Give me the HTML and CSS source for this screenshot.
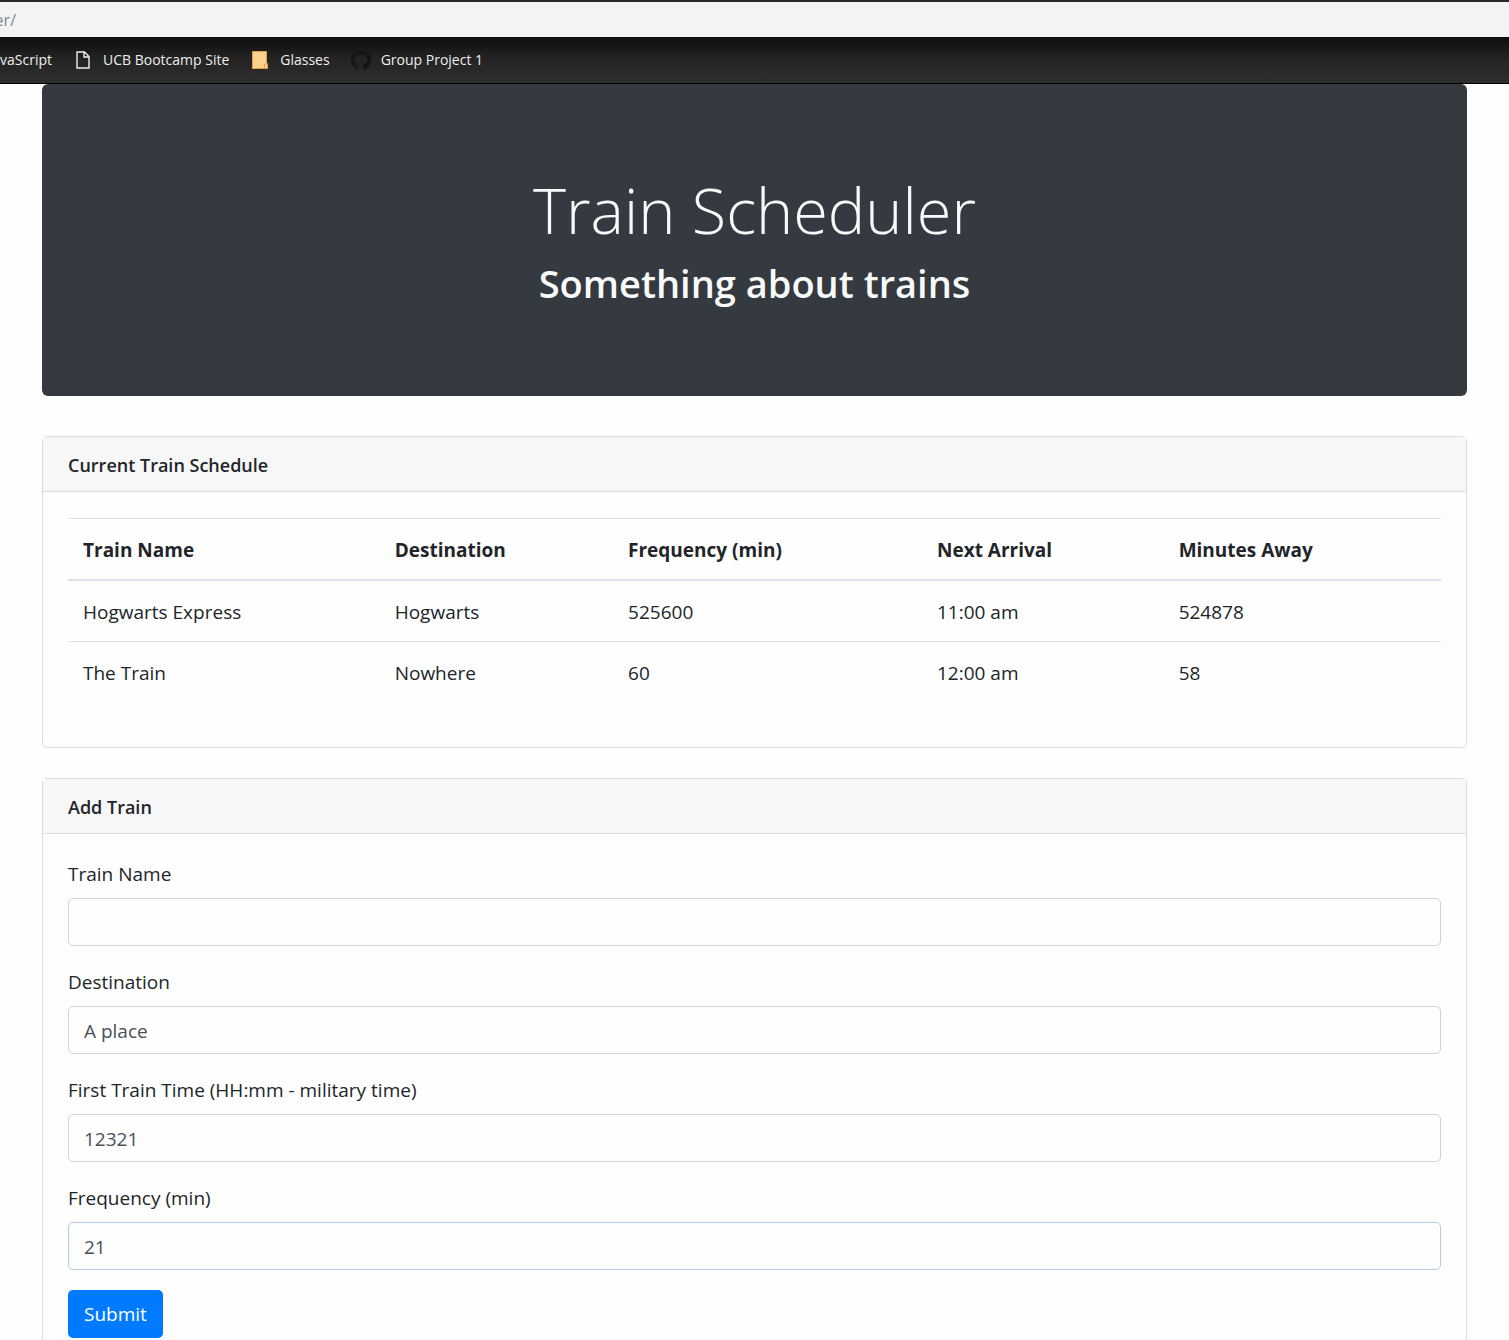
FILE: index.html
```html
<!DOCTYPE html>
<html lang="en">
<head>
  <meta charset="utf-8">
  <meta name="viewport" content="width=device-width, initial-scale=1">
  <title>Train Scheduler</title>
  <link rel="stylesheet" href="styles.css">
</head>
<body>
  <div class="address-bar"><span class="address">er/</span></div>
  <nav class="bookmarks" aria-label="Bookmarks">
    <a class="bookmark" href="#">vaScript</a>
    <a class="bookmark" href="#">
      <svg class="icon" viewBox="0 0 20 20" aria-hidden="true"><path d="M4 2h7.5L16 6.500V18H4zM11 2v5h5" fill="none" stroke="#eee" stroke-width="1.400"/></svg>
      <span>UCB Bootcamp Site</span>
    </a>
    <a class="bookmark" href="#">
      <svg class="icon" viewBox="0 0 20 20" aria-hidden="true"><path d="M2.500 1.500h14v12h1v5h-15z" fill="#fbd08d" stroke="#e0a04a"/><path d="M14.500 18v-4h2" fill="none" stroke="#e0a04a"/></svg>
      <span>Glasses</span>
    </a>
    <a class="bookmark" href="#">
      <svg class="icon" viewBox="0 0 16 16" aria-hidden="true"><path fill="#131415" d="M8 0C3.580 0 0 3.580 0 8c0 3.540 2.290 6.530 5.470 7.590.4.070.550-.170.550-.380 0-.190-.010-.820-.010-1.490-2.010.370-2.530-.490-2.690-.940-.090-.230-.480-.940-.820-1.130-.280-.150-.680-.520-.010-.530.630-.010 1.080.580 1.230.820.720 1.210 1.870.870 2.330.660.070-.520.280-.870.510-1.070-1.780-.2-3.640-.890-3.640-3.950 0-.870.310-1.590.820-2.150-.080-.2-.360-1.020.080-2.120 0 0 .670-.210 2.200.820.640-.180 1.320-.270 2-.270s1.360.090 2 .270c1.530-1.040 2.200-.820 2.200-.820.440 1.100.160 1.920.080 2.120.510.560.820 1.270.820 2.150 0 3.070-1.870 3.750-3.650 3.950.290.250.540.730.540 1.480 0 1.070-.010 1.930-.010 2.200 0 .210.150.460.550.380A8.010 8.010 0 0 0 16 8c0-4.420-3.580-8-8-8z"/></svg>
      <span>Group Project 1</span>
    </a>
  </nav>

  <main class="container">
    <header class="jumbotron">
      <h1 class="title">Train Scheduler</h1>
      <p class="subtitle">Something about trains</p>
    </header>

    <section class="card">
      <h2 class="card-header">Current Train Schedule</h2>
      <div class="schedule-body">
        <table class="schedule">
          <thead>
            <tr>
              <th class="col-name" scope="col">Train Name</th>
              <th class="col-destination" scope="col">Destination</th>
              <th class="col-frequency" scope="col">Frequency (min)</th>
              <th class="col-arrival" scope="col">Next Arrival</th>
              <th class="col-away" scope="col">Minutes Away</th>
            </tr>
          </thead>
          <tbody>
            <tr><td>Hogwarts Express</td><td>Hogwarts</td><td>525600</td><td>11:00 am</td><td>524878</td></tr>
            <tr><td>The Train</td><td>Nowhere</td><td>60</td><td>12:00 am</td><td>58</td></tr>
          </tbody>
        </table>
      </div>
    </section>

    <section class="card">
      <h2 class="card-header">Add Train</h2>
      <form class="train-form">
        <div class="field">
          <label for="train-name">Train Name</label>
          <input id="train-name" type="text">
        </div>
        <div class="field">
          <label for="destination">Destination</label>
          <input id="destination" type="text" value="A place">
        </div>
        <div class="field">
          <label for="first-time">First Train Time (HH:mm - military time)</label>
          <input id="first-time" type="text" value="12321">
        </div>
        <div class="field">
          <label for="frequency">Frequency (min)</label>
          <input class="active" id="frequency" type="text" value="21">
        </div>
        <button class="submit" type="submit">Submit</button>
      </form>
    </section>
  </main>
</body>
</html>
```
FILE: styles.css
```css
* {
  box-sizing: border-box;
}

body {
  margin: 0;
  background: #fefefe;
  color: #212529;
  font: 19px/30px "Segoe UI", "Open Sans", sans-serif;
}

.address-bar {
  height: 37px;
  border-top: 2px solid #2d2b2a;
  background: #f1f3f4;
  color: #85888b;
  font-size: 16px;
  line-height: 36px;
}

/* Only the tail of the address stays in view */
.address {
  display: flex;
  justify-content: flex-end;
  width: 16px;
  overflow: hidden;
}

.bookmarks {
  display: flex;
  align-items: center;
  gap: 21px;
  height: 47px;
  border-bottom: 1px solid #000;
  background: linear-gradient(#0e0e0e, #242424 50%, #2e2e2e);
  overflow: hidden;
}

.bookmark {
  display: flex;
  align-items: center;
  gap: 10px;
  color: #eee;
  font-size: 14px;
  text-decoration: none;
  white-space: nowrap;
}

.icon {
  flex: none;
  width: 20px;
  height: 20px;
}

.container {
  padding: 0 42px 30px;
}

.jumbotron {
  margin-bottom: 40px;
  padding: 80px 40px 86px;
  border-radius: 6px;
  background: #343a40;
  color: #f8f9fa;
  text-align: center;
}

.title {
  margin: 0;
  font-size: 63px;
  font-weight: 300;
  line-height: 92px;
}

.subtitle {
  margin: 0;
  font-size: 38px;
  font-weight: 600;
  line-height: 54px;
}

.card {
  margin-bottom: 30px;
  border: 1px solid #dcdddd;
  border-radius: 5px;
}

.card-header {
  margin: 0;
  padding: 13px 25px 11px;
  border-bottom: 1px solid #dcdddd;
  background: #f7f7f7;
  font-size: 18px;
  font-weight: 600;
}

.schedule-body {
  padding: 26px 25px 45px;
}

.schedule {
  width: 100%;
  border-spacing: 0;
  table-layout: fixed;
}

.schedule th,
.schedule td {
  padding: 16px 15px 14px;
  border-top: 1px solid #dee2e6;
  text-align: left;
}

.schedule th {
  border-bottom: 2px solid #dee2e6;
  font-weight: 700;
}

.schedule tbody tr:first-child td {
  border-top: 0;
}

.col-name { width: 22.7%; }
.col-destination { width: 17%; }
.col-frequency { width: 22.5%; }
.col-arrival { width: 17.6%; }
.col-away { width: 20.2%; }

.train-form {
  padding: 24px 25px;
}

.field {
  display: flex;
  flex-direction: column;
  gap: 8px;
  margin-bottom: 20px;
}

.field label {
  line-height: 32px;
}

.field input {
  width: 100%;
  height: 48px;
  padding: 2px 15px 0;
  border: 1px solid #ced4da;
  border-radius: 5px;
  outline: 0;
  background: #fefefe;
  color: #495057;
  font: inherit;
}

.field .active {
  border-color: #b3cde8;
}

.submit {
  height: 48px;
  padding: 0 16px;
  border: 0;
  border-radius: 5px;
  background: #007bff;
  color: #fff;
  font: inherit;
}
```
